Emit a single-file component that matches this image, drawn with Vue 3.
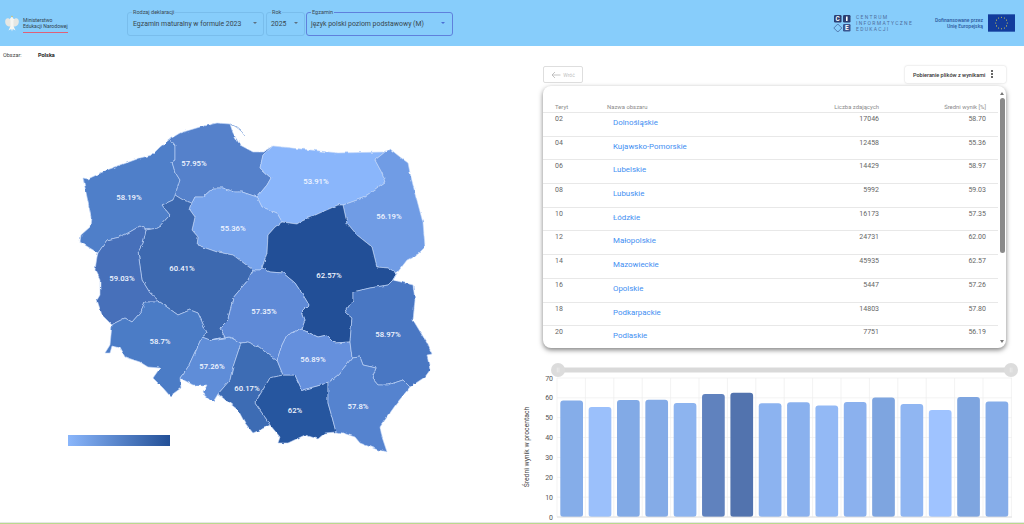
<script setup>
const regions = [
  { c: '#4f7fc9', p: '83,178 88,179 107,170 140,158 152,155 160,147 170,139 175,145 175,160 172,162 175,172 180,180 176,195 173,200 162,205 170,215 158,228 146,230 140,226 128,233 120,237 107,240 98,253 80,242 81,235 90,227 91,217 87,197' },
  { c: '#5481cb', p: '170,139 180,133 200,127 217,123 230,124 233,133 240,145 253,152 263,152 273,146 263,155 260,168 271,178 267,185 257,197 242,192 235,192 223,188 213,188 203,197 195,197 192,203 183,200 175,195 180,180 175,172 172,162 175,160 175,145' },
  { c: '#8ab6fb', p: '273,146 338,153 385,152 375,160 382,173 385,182 363,198 343,205 338,205 322,212 300,222 297,224 282,222 277,213 262,207 257,197 267,185 271,178 260,168 263,155' },
  { c: '#6f9ce5', p: '385,152 390,149 400,157 408,163 410,173 415,193 423,223 425,247 417,255 407,260 397,273 388,268 377,267 372,247 357,235 347,223 343,205 363,198 385,182 382,173 375,160' },
  { c: '#76a3ec', p: '195,197 203,197 213,188 223,188 235,192 242,192 257,197 262,207 277,213 282,222 275,227 268,235 267,253 262,268 260,270 253,270 233,255 217,252 197,245 198,237 192,230 195,217 190,210 192,203' },
  { c: '#235097', p: '343,205 347,223 357,235 372,247 377,267 388,268 397,273 393,280 388,285 370,288 353,292 353,300 345,312 352,318 350,342 335,343 327,335 318,337 303,330 302,328 305,320 302,312 309,305 303,295 295,283 283,273 270,272 262,268 267,253 268,235 275,227 282,222 297,224 300,222 322,212 338,205' },
  { c: '#3e69b0', p: '175,195 183,200 192,203 190,210 195,217 192,230 198,237 197,245 217,252 233,255 253,270 248,280 233,298 228,320 220,328 225,337 210,340 202,337 207,333 198,313 190,310 178,315 160,302 150,293 142,280 138,252 143,243 146,230 158,228 170,215 162,205 173,200' },
  { c: '#466fba', p: '98,253 107,240 120,237 128,233 140,226 146,230 143,243 138,252 142,280 150,293 160,302 145,302 140,313 132,322 125,318 115,323 112,325 102,315 97,300 100,295 100,280 95,270 97,257' },
  { c: '#4b7bc6', p: '112,325 115,323 125,318 132,322 140,313 145,302 160,302 178,315 190,310 198,313 207,333 202,337 188,367 180,378 181,388 170,396 163,388 153,378 160,368 148,367 140,362 125,357 120,348 112,346 110,353 105,353 110,345' },
  { c: '#5f8dd8', p: '202,337 210,340 230,337 241,343 233,367 230,380 218,394 213,402 203,393 207,385 193,385 180,378 188,367' },
  { c: '#5e8ad7', p: '262,268 270,272 283,273 295,283 303,295 309,305 302,312 305,320 302,328 287,335 282,345 277,360 260,347 248,342 241,343 230,337 210,340 225,337 220,328 228,320 233,298 248,280 253,270 260,270' },
  { c: '#3e6cb4', p: '241,343 248,342 260,347 277,360 283,375 270,378 255,403 267,420 270,425 260,430 253,433 245,423 238,410 218,394 230,380 233,367' },
  { c: '#28569f', p: '283,375 295,375 302,390 328,383 328,403 332,417 336,432 325,433 318,439 305,435 288,443 278,443 280,437 270,425 267,420 255,403 270,378' },
  { c: '#6590dd', p: '302,328 303,330 318,337 327,335 335,343 350,342 352,358 338,375 328,383 302,390 295,375 283,375 277,360 282,345 287,335' },
  { c: '#4a77c3', p: '397,273 393,280 413,285 415,300 413,320 427,343 432,354 427,355 430,370 425,377 410,387 403,380 397,382 388,385 378,385 372,378 376,368 363,365 360,357 352,358 350,342 352,318 345,312 353,300 353,292 370,288 388,285 393,280' },
  { c: '#5583cf', p: '352,358 360,357 363,365 376,368 372,378 378,385 388,385 397,382 403,380 410,387 397,403 380,427 382,437 387,452 378,450 360,443 355,437 343,433 336,432 332,417 328,403 328,383 338,375' }
]

const labels = [
  ['58.19%', 129, 197], ['57.95%', 194, 163], ['53.91%', 316, 181], ['56.19%', 389, 216],
  ['55.36%', 233, 228], ['60.41%', 182, 268], ['62.57%', 329, 275], ['59.03%', 122, 278],
  ['57.35%', 264, 311], ['58.7%', 160, 341], ['58.97%', 388, 334], ['56.89%', 313, 359],
  ['57.26%', 212, 366], ['60.17%', 247, 388], ['62%', 295, 410], ['57.8%', 358, 406]
]

const rows = [
  ['02', 'Dolnośląskie', '17046', '58.70'], ['04', 'Kujawsko-Pomorskie', '12458', '55.36'],
  ['06', 'Lubelskie', '14429', '58.97'], ['08', 'Lubuskie', '5992', '59.03'],
  ['10', 'Łódzkie', '16173', '57.35'], ['12', 'Małopolskie', '24731', '62.00'],
  ['14', 'Mazowieckie', '45935', '62.57'], ['16', 'Opolskie', '5447', '57.26'],
  ['18', 'Podkarpackie', '14803', '57.80'], ['20', 'Podlaskie', '7751', '56.19']
]

const series = [
  [58.7, '#85ade9'], [55.36, '#9bc0fb'], [58.97, '#82aae6'], [59.03, '#84abe7'],
  [57.35, '#8db4ef'], [62, '#6082be'], [62.57, '#5273ae'], [57.26, '#8cb3f0'],
  [57.8, '#8ab1ee'], [56.19, '#93b9f5'], [57.95, '#8bb1ee'], [60.17, '#7ea5e0'],
  [56.89, '#90b6f2'], [53.91, '#9fc3ff'], [60.41, '#7ea5e0'], [58.19, '#86ade9']
]
const yZero = 155
const yTop = 16
const pxPerUnit = (yZero - yTop) / 70
const bars = series.map(([v, fill], i) => ({
  x: 40.3 + i * 28.35,
  h: v * pxPerUnit,
  y: yZero - v * pxPerUnit,
  fill
}))
const ticks = [0, 10, 20, 30, 40, 50, 60, 70].map((t) => ({ t, y: yZero - t * pxPerUnit }))
const vLines = Array.from({ length: 17 }, (_, i) => 37 + i * 28.4)
const stars = Array.from({ length: 12 }, (_, i) => {
  const a = (i * Math.PI) / 6
  return { x: 14 + Math.cos(a) * 6, y: 9 + Math.sin(a) * 6 }
})
</script>

<template>
  <div class="page">
    <header class="top">
      <div class="mein">
        <svg class="eagle" viewBox="0 0 14 17">
          <path d="M6 5 C3.500 2.500 .6 2.500 .2 6 C0 9 1.500 12 6 11.500 Z M8 5 C10.500 2.500 13.400 2.500 13.800 6 C14 9 12.500 12 8 11.500 Z" fill="#e6e7e3" />
          <path d="M7 1.500 L8.200 3.500 L9.500 4.200 L8.500 5.500 L8.500 11 L10.500 15.500 L7.800 14 L7 16.500 L6.200 14 L3.500 15.500 L5.500 11 L5.500 5.500 L4.800 4 Z" fill="#f6f6f2" />
          <path d="M6 2 L7 .4 L8 2" fill="#d8c15a" />
        </svg>
        <div class="mein-text">
          <span>Ministerstwo</span>
          <span>Edukacji Narodowej</span>
          <i class="mein-line"></i>
        </div>
      </div>
      <div class="fields">
        <div class="field f-type">
          <label>Rodzaj deklaracji</label>
          <span>Egzamin maturalny w formule 2023</span>
          <i class="caret"></i>
        </div>
        <div class="field f-year">
          <label>Rok</label>
          <span>2025</span>
          <i class="caret"></i>
        </div>
        <div class="field f-exam">
          <label>Egzamin</label>
          <span>język polski poziom podstawowy (M)</span>
          <i class="caret"></i>
        </div>
      </div>
      <div class="partners">
        <svg class="cke-mark" viewBox="0 0 18 18">
          <rect x="1" y="1" width="7.500" height="7.500" rx="1.200" fill="#2c3f73" />
          <text x="4.750" y="7.300" class="cke-l">C</text>
          <rect x="10" y="1" width="7.500" height="7.500" rx="1.200" fill="#2c3f73" />
          <rect x="13" y="2.500" width="1.600" height="4.500" fill="#fff" />
          <path d="M4.800 10 L8.800 14 L4.800 18 L.8 14 Z" fill="none" stroke="#3d5a92" stroke-width=".7" />
          <rect x="10" y="10" width="7.500" height="7.500" rx="1.200" fill="#3a5690" />
          <text x="13.750" y="16.300" class="cke-l">E</text>
        </svg>
        <div class="cke-text">
          <span>CENTRUM</span>
          <span>INFORMATYCZNE</span>
          <span>EDUKACJI</span>
        </div>
        <div class="eu-text">
          <span>Dofinansowane przez</span>
          <span>Unię Europejską</span>
        </div>
        <svg class="eu-flag" viewBox="0 0 28 18">
          <rect width="28" height="18" fill="#123c9c" />
          <circle v-for="(s, i) in stars" :key="i" :cx="s.x" :cy="s.y" r=".55" fill="#e9d84a" />
        </svg>
      </div>
    </header>

    <main class="content">
      <section class="left">
        <div class="area">
          <span class="area-key">Obszar:</span>
          <b class="area-val">Polska</b>
        </div>
        <svg class="map" viewBox="0 66 520 456" width="520" height="456">
          <defs>
            <linearGradient id="legend">
              <stop offset="0" stop-color="#8ab6fb" />
              <stop offset="1" stop-color="#235097" />
            </linearGradient>
            <filter id="rough" x="-5%" y="-5%" width="110%" height="110%">
              <feTurbulence type="fractalNoise" baseFrequency="0.16" numOctaves="2" seed="4" />
              <feDisplacementMap in="SourceGraphic" scale="3" xChannelSelector="R" yChannelSelector="G" />
            </filter>
          </defs>
          <g filter="url(#rough)">
            <path d="M230 124 C236 126 241 130 245 136" fill="none" stroke="#7fa3dc" stroke-width=".8" />
            <polygon v-for="(r, i) in regions" :key="i" :points="r.p" :fill="r.c" class="region" />
          </g>
          <text v-for="l in labels" :key="l[0]" :x="l[1]" :y="l[2] + 3" class="map-label">{{ l[0] }}</text>
          <rect x="68" y="435" width="102" height="11" fill="url(#legend)" />
        </svg>
      </section>

      <section class="right">
        <div class="actions">
          <div class="back">
            <svg viewBox="0 0 10 8" width="10" height="8">
              <path d="M9.500 4 H1 M4 1 L1 4 L4 7" fill="none" stroke="#b5b5b5" stroke-width=".8" />
            </svg>
            <span>Wróć</span>
          </div>
          <div class="download">
            <span>Pobieranie plików z wynikami</span>
            <i class="dots"></i>
          </div>
        </div>

        <div class="card">
          <div class="table">
            <div class="row head">
              <span>Teryt</span>
              <span>Nazwa obszaru</span>
              <span class="num">Liczba zdających</span>
              <span class="num">Średni wynik [%]</span>
            </div>
            <div v-for="r in rows" :key="r[0]" class="row">
              <span>{{ r[0] }}</span>
              <a class="link">{{ r[1] }}</a>
              <span class="num">{{ r[2] }}</span>
              <span class="num">{{ r[3] }}</span>
            </div>
          </div>
          <div class="scroll">
            <i class="arrow up"></i>
            <i class="thumb"></i>
            <i class="arrow down"></i>
          </div>
        </div>

        <svg class="chart" viewBox="0 0 504 160" width="504" height="160">
          <rect x="42" y="5.500" width="446" height="5" fill="#d9d9d9" />
          <circle cx="38" cy="8" r="7" fill="#dcdcdc" />
          <circle cx="491" cy="8" r="7" fill="#dcdcdc" />
          <path d="M37.300 5.500 V10.500 M38.900 5.500 V10.500 M490.300 5.500 V10.500 M491.900 5.500 V10.500" stroke="#f2f2f2" stroke-width=".6" />
          <line v-for="t in ticks" :key="'h' + t.t" x1="37" x2="492" :y1="t.y" :y2="t.y" stroke="#eeeeee" stroke-width=".7" />
          <line v-for="(x, i) in vLines" :key="'v' + i" :x1="x" :x2="x" :y1="yTop" :y2="yZero" stroke="#eeeeee" stroke-width=".7" />
          <rect v-for="(b, i) in bars" :key="'b' + i" :x="b.x" :y="b.y" width="22.700" :height="b.h" rx="3" :fill="b.fill" />
          <line x1="37" x2="492" :y1="yZero" :y2="yZero" stroke="#dddddd" stroke-width=".8" />
          <text v-for="t in ticks" :key="'l' + t.t" x="33" :y="t.y + 2.500" class="tick">{{ t.t }}</text>
          <text class="axis-title" transform="translate(9 85) rotate(-90)">Średni wynik w procentach</text>
        </svg>
      </section>
    </main>

    <footer class="bottom"></footer>
  </div>
</template>

<style>
html, body { margin: 0; background: #fff; }
</style>

<style scoped>
.page {
  width: 1024px;
  height: 524px;
  overflow: hidden;
  display: flex;
  flex-direction: column;
  font-family: Roboto, "Liberation Sans", sans-serif;
  background: #fff;
}
.top {
  height: 46px;
  flex: none;
  background: #87cdfb;
  display: flex;
  align-items: center;
  box-sizing: border-box;
  padding: 0 9px 0 5px;
}
.mein {
  width: 122px;
  flex: none;
  display: flex;
  align-items: center;
  gap: 4px;
}
.eagle { width: 14px; height: 17px; }
.mein-text {
  display: flex;
  flex-direction: column;
  font-size: 5.100px;
  line-height: 6px;
  color: #30424f;
  margin-top: 3px;
}
.mein-line {
  display: block;
  height: 1px;
  width: 45px;
  background: #df6078;
  margin-top: 3px;
}
.fields { display: flex; gap: 2px; margin-top: 1px; }
.field {
  position: relative;
  height: 24px;
  box-sizing: border-box;
  border: 1px solid #79bdec;
  border-radius: 3px;
  display: flex;
  align-items: center;
  padding-left: 5px;
  font-size: 6.900px;
  color: #37474f;
  white-space: nowrap;
}
.field label {
  position: absolute;
  top: -4px;
  left: 4px;
  padding: 0 1px;
  font-size: 5.500px;
  line-height: 7px;
  background: #87cdfb;
  color: #3b4a54;
}
.caret {
  position: absolute;
  right: 6px;
  top: 9.500px;
  border-left: 2.500px solid transparent;
  border-right: 2.500px solid transparent;
  border-top: 2.500px solid #5c6f80;
}
.f-type { width: 137px; }
.f-year { width: 39px; padding-left: 4px; }
.f-exam { width: 147px; margin-left: -1px; padding-left: 4px; border-color: #5f80dc; }
.f-exam .caret { border-top-color: #4a6fd6; right: 7px; }
.partners {
  margin-left: auto;
  display: flex;
  align-items: center;
}
.cke-mark { width: 18px; height: 18px; margin-right: 5px; }
.cke-l {
  font-size: 6.500px;
  font-weight: 700;
  fill: #fff;
  text-anchor: middle;
}
.cke-text {
  width: 77px;
  display: flex;
  flex-direction: column;
  font-size: 5px;
  line-height: 6px;
  letter-spacing: 1.300px;
  color: #4f6f9e;
  white-space: nowrap;
}
.eu-text {
  width: 50px;
  display: flex;
  flex-direction: column;
  align-items: flex-end;
  font-size: 5px;
  line-height: 6.500px;
  font-weight: 500;
  color: #2c5a9e;
  margin-right: 5px;
  white-space: nowrap;
}
.eu-flag { width: 27px; height: 18px; }

.content { flex: 1; display: flex; min-height: 0; }
.left { width: 520px; flex: none; }
.area {
  height: 20px;
  display: flex;
  align-items: flex-start;
  padding: 6px 0 0 3px;
  box-sizing: border-box;
  font-size: 5.500px;
  line-height: 7px;
  color: #444;
}
.area-key { width: 35px; }
.area-val { color: #222; font-weight: 700; }
.map { display: block; }
.region { stroke: #c3d6f8; stroke-width: .6; stroke-linejoin: round; }
.map-label {
  font-size: 7.700px;
  font-weight: 500;
  fill: #f2f6ff;
  text-anchor: middle;
}

.right { width: 504px; flex: none; box-sizing: border-box; padding: 20px 18px 0 23px; }
.actions { display: flex; justify-content: space-between; height: 17px; }
.back {
  width: 40px;
  box-sizing: border-box;
  border: 1px solid #dedede;
  border-radius: 2px;
  display: flex;
  align-items: center;
  justify-content: center;
  gap: 2px;
  font-size: 5px;
  color: #c0c0c0;
}
.download {
  width: 101px;
  box-sizing: border-box;
  border-radius: 2px;
  box-shadow: 0 0 2px rgba(0, 0, 0, .22);
  display: flex;
  align-items: center;
  padding-left: 8px;
  font-size: 5.500px;
  font-weight: 500;
  color: #333;
  white-space: nowrap;
  position: relative;
}
.dots {
  position: absolute;
  right: 13px;
  top: 4px;
  width: 2px;
  height: 2px;
  border-radius: 50%;
  background: #333;
  box-shadow: 0 3px 0 #333, 0 6px 0 #333;
}
.card {
  margin-top: 3px;
  height: 262px;
  border-radius: 8px;
  background: #fff;
  box-shadow: 0 2px 5px rgba(0, 0, 0, .5);
  overflow: hidden;
  position: relative;
}
.table { width: 455px; }
.row {
  display: grid;
  grid-template-columns: 52px 220px 52px 107px;
  padding: 1px 12px 0;
  height: 23.700px;
  box-sizing: border-box;
  border-bottom: 1px solid #e8e8e8;
  font-size: 7px;
  line-height: 10px;
  color: #666;
}
.row.head {
  height: 27px;
  align-items: end;
  font-size: 5.900px;
  line-height: 8px;
  color: #8a8a8a;
  padding-bottom: 1px;
  white-space: nowrap;
}
.num { text-align: right; justify-self: end; white-space: nowrap; }
.link {
  color: #3f8ff2;
  font-size: 7.900px;
  padding: 4px 0 0 6px;
}
.scroll {
  position: absolute;
  top: 0;
  right: 0;
  width: 8px;
  height: 100%;
}
.thumb {
  position: absolute;
  top: 12px;
  left: 1.500px;
  width: 5px;
  height: 155px;
  border-radius: 3px;
  background: #8a8a8a;
}
.arrow {
  position: absolute;
  left: 2px;
  border-left: 2px solid transparent;
  border-right: 2px solid transparent;
}
.arrow.up { top: 6px; border-bottom: 3px solid #777; }
.arrow.down { bottom: 5px; border-top: 3px solid #777; }
.chart { display: block; margin: 14px 0 0 -23px; }
.tick { font-size: 7px; fill: #555; text-anchor: end; }
.axis-title { font-size: 6.800px; fill: #444; text-anchor: middle; }
.bottom {
  height: 2px;
  flex: none;
  background: linear-gradient(#e6e6e6 50%, #b9d98f 50%);
}
</style>
